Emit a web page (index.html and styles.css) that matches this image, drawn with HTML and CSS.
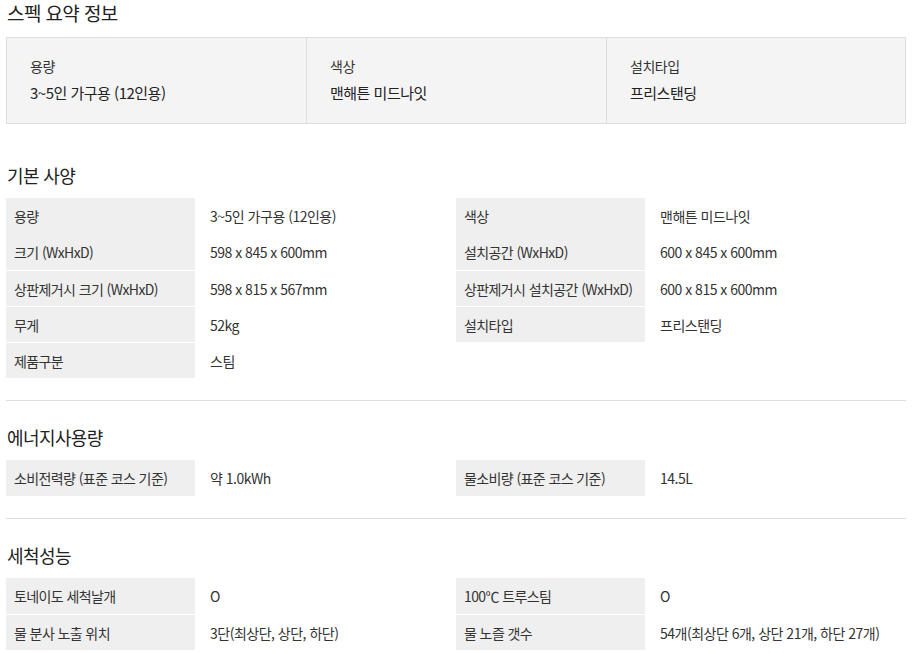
FILE: index.html
```html
<!DOCTYPE html>
<html lang="ko">
<head>
<meta charset="utf-8">
<link rel="stylesheet" href="styles.css">
</head>
<body>
<div class="page">
  <h2 class="title-main">스펙 요약 정보</h2>
  <div class="summary">
    <div class="sum-cell">
      <div class="sum-label">용량</div>
      <div class="sum-value">3~5인 가구용 (12인용)</div>
    </div>
    <div class="sum-cell">
      <div class="sum-label">색상</div>
      <div class="sum-value">맨해튼 미드나잇</div>
    </div>
    <div class="sum-cell">
      <div class="sum-label">설치타입</div>
      <div class="sum-value">프리스탠딩</div>
    </div>
  </div>

  <section class="spec first">
    <h3 class="spec-title">기본 사양</h3>
    <div class="grid">
      <div class="item"><div class="lbl">용량</div><div class="val">3~5인 가구용 (12인용)</div></div>
      <div class="item"><div class="lbl">색상</div><div class="val">맨해튼 미드나잇</div></div>
      <div class="item"><div class="lbl">크기 (WxHxD)</div><div class="val">598 x 845 x 600mm</div></div>
      <div class="item"><div class="lbl">설치공간 (WxHxD)</div><div class="val">600 x 845 x 600mm</div></div>
      <div class="item sep"><div class="lbl">상판제거시 크기 (WxHxD)</div><div class="val">598 x 815 x 567mm</div></div>
      <div class="item sep"><div class="lbl">상판제거시 설치공간 (WxHxD)</div><div class="val">600 x 815 x 600mm</div></div>
      <div class="item sep"><div class="lbl">무게</div><div class="val">52kg</div></div>
      <div class="item sep"><div class="lbl">설치타입</div><div class="val">프리스탠딩</div></div>
      <div class="item sep"><div class="lbl">제품구분</div><div class="val">스팀</div></div>
    </div>
  </section>

  <section class="spec">
    <h3 class="spec-title">에너지사용량</h3>
    <div class="grid">
      <div class="item"><div class="lbl">소비전력량 (표준 코스 기준)</div><div class="val">약 1.0kWh</div></div>
      <div class="item"><div class="lbl">물소비량 (표준 코스 기준)</div><div class="val">14.5L</div></div>
    </div>
  </section>

  <section class="spec">
    <h3 class="spec-title">세척성능</h3>
    <div class="grid">
      <div class="item"><div class="lbl">토네이도 세척날개</div><div class="val">O</div></div>
      <div class="item"><div class="lbl">100℃ 트루스팀</div><div class="val">O</div></div>
      <div class="item sep"><div class="lbl">물 분사 노출 위치</div><div class="val">3단(최상단, 상단, 하단)</div></div>
      <div class="item sep"><div class="lbl">물 노즐 갯수</div><div class="val">54개(최상단 6개, 상단 21개, 하단 27개)</div></div>
    </div>
  </section>
</div>
</body>
</html>
```

FILE: styles.css
```css
* { box-sizing: border-box; }
html, body { margin: 0; padding: 0; background: #fff; }
body {
  font-family: "Noto Sans CJK KR", "Noto Sans", sans-serif;
  color: #222;
  width: 912px;
  height: 653px;
  overflow: hidden;
}
.page { padding: 0 6px; }

.title-main {
  margin: 0 0 11px 1px;
  font-size: 19px;
  line-height: 26px;
  font-weight: 400;
  letter-spacing: -0.6px;
  color: #222;
}

.summary {
  display: grid;
  grid-template-columns: 299px 300px 1fr;
  width: 900px;
  height: 87px;
  background: #f4f4f4;
  border: 1px solid #ddd;
}
.sum-cell {
  padding: 18px 23px 0;
  border-left: 1px solid #ddd;
}
.sum-cell:first-child { border-left: none; }
.sum-label {
  font-size: 14px;
  line-height: 20px;
  color: #333;
  letter-spacing: -0.5px;
}
.sum-value {
  margin-top: 6px;
  font-size: 15px;
  line-height: 22px;
  color: #222;
  letter-spacing: -0.5px;
}

.spec {
  border-top: 1px solid #ddd;
  margin-top: 22px;
  padding-top: 24px;
}
.spec.first {
  border-top: none;
  margin-top: 39px;
  padding-top: 0;
}
.spec-title {
  margin: 0 0 11px 1px;
  font-size: 18px;
  line-height: 24px;
  font-weight: 400;
  letter-spacing: -0.6px;
  color: #222;
}
.grid {
  display: grid;
  grid-template-columns: 450px 450px;
}
.item {
  display: flex;
  height: 36px;
  align-items: stretch;
}
.item.sep { border-top: 1px solid #fff; }
.lbl {
  width: 189px;
  flex: none;
  background: #efefef;
  padding-left: 8px;
  display: flex;
  align-items: center;
  font-size: 14px;
  color: #333;
  letter-spacing: -0.6px;
}
.val {
  padding-left: 15px;
  display: flex;
  align-items: center;
  font-size: 14px;
  color: #333;
  letter-spacing: -0.5px;
}
```
